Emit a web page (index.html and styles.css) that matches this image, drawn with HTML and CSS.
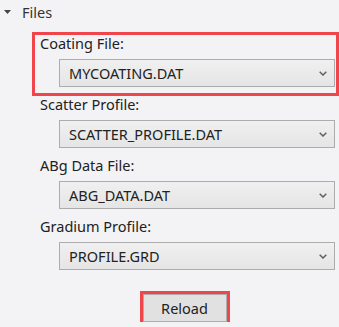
FILE: index.html
```html
<!DOCTYPE html>
<html lang="en">
<head>
    <meta charset="UTF-8">
    <title>Files</title>
    <link rel="stylesheet" href="styles.css">
</head>
<body>

    <div class="expander-header">
        <svg class="expander-arrow" width="7" height="4" viewBox="0 0 7 4">
            <polygon points="0,0 7,0 3.5,4" fill="#444"></polygon>
        </svg>
        <span>Files</span>
    </div>

    <div class="files-panel">
        <div class="file-group highlighted">
            <div class="file-label">Coating File:</div>
            <div class="combo">
                <span>MYCOATING.DAT</span>
                <svg class="chevron" width="8" height="5" viewBox="0 0 8 5">
                    <polyline points="0.7,0.7 4,4 7.3,0.7" fill="none" stroke="#606060" stroke-width="1.5"></polyline>
                </svg>
            </div>
        </div>

        <div class="file-group">
            <div class="file-label">Scatter Profile:</div>
            <div class="combo">
                <span>SCATTER_PROFILE.DAT</span>
                <svg class="chevron" width="8" height="5" viewBox="0 0 8 5">
                    <polyline points="0.7,0.7 4,4 7.3,0.7" fill="none" stroke="#606060" stroke-width="1.5"></polyline>
                </svg>
            </div>
        </div>

        <div class="file-group">
            <div class="file-label">ABg Data File:</div>
            <div class="combo">
                <span>ABG_DATA.DAT</span>
                <svg class="chevron" width="8" height="5" viewBox="0 0 8 5">
                    <polyline points="0.7,0.7 4,4 7.3,0.7" fill="none" stroke="#606060" stroke-width="1.5"></polyline>
                </svg>
            </div>
        </div>

        <div class="file-group">
            <div class="file-label">Gradium Profile:</div>
            <div class="combo">
                <span>PROFILE.GRD</span>
                <svg class="chevron" width="8" height="5" viewBox="0 0 8 5">
                    <polyline points="0.7,0.7 4,4 7.3,0.7" fill="none" stroke="#606060" stroke-width="1.5"></polyline>
                </svg>
            </div>
        </div>

        <div class="button-row">
            <button class="reload-button">Reload</button>
        </div>
    </div>

</body>
</html>
```

FILE: styles.css
```css
body {
    margin: 0;
    background-color: #f3f3f5;
    font-family: 'Segoe UI', 'Noto Sans', sans-serif;
    font-size: 14.5px;
    color: #222;
    overflow: hidden;
}

.expander-header {
    display: flex;
    align-items: center;
    height: 20px;
    margin-top: 2px;
    line-height: 20px;
    color: #333;
}

.expander-arrow {
    margin-left: 4px;
    margin-right: 11px;
}

.files-panel {
    margin-left: 32px;
    width: 305px;
    margin-top: 11px;
}

.file-group {
    padding-left: 8px;
    margin-bottom: 7px;
}

/* red annotation frame around the first group */
.highlighted {
    position: relative;
}

.highlighted::after {
    content: "";
    position: absolute;
    top: -1px;
    right: -2px;
    bottom: -9px;
    left: 0;
    border: 3px solid #f0464b;
}

.file-label {
    height: 20px;
    line-height: 20px;
    margin-bottom: 6px;
}

.combo {
    display: flex;
    align-items: center;
    justify-content: space-between;
    box-sizing: border-box;
    width: 276px;
    height: 28px;
    margin-left: 19px;
    padding: 0 7px 0 9px;
    border: 1px solid #acacac;
    background: linear-gradient(#f0f0f0, #e5e5e5);
}

.chevron {
    margin-top: 1px;
}

.button-row {
    display: flex;
    justify-content: center;
    margin-top: 24px;
}

.reload-button {
    width: 84px;
    height: 28px;
    font-family: inherit;
    font-size: 14.5px;
    color: #222;
    background-color: #e1e1e1;
    border: 1px solid #adadad;
    outline: 3px solid #f0464b;
    padding: 0;
}
```
